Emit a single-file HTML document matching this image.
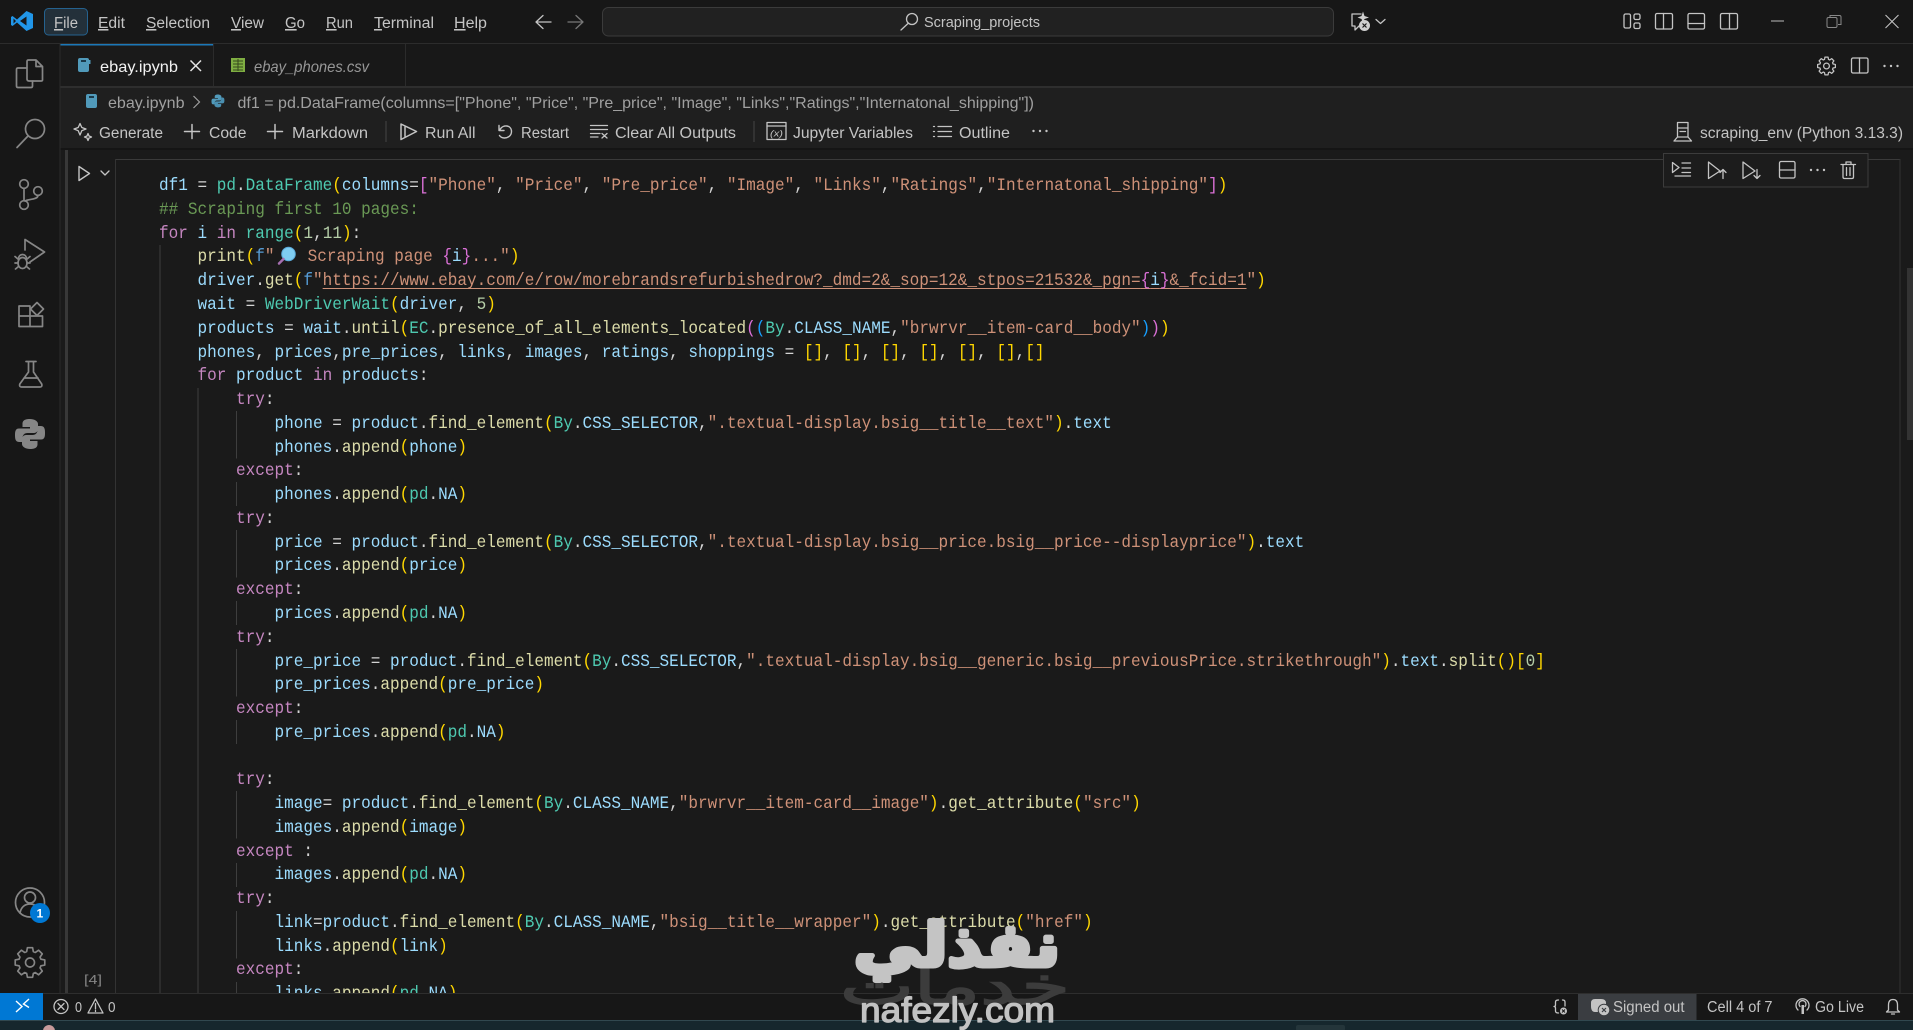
<!DOCTYPE html>
<html lang="en"><head><meta charset="utf-8"><title>Scraping_projects</title>
<style>
html,body{margin:0;padding:0;width:1913px;height:1030px;overflow:hidden;background:#1a1a1a}
svg{position:absolute;left:0;top:0}
svg text{font-family:"Liberation Sans",sans-serif;font-size:15.5px;fill:#c4c4c4;white-space:pre}
.i{fill:none;stroke:#c4c4c4;stroke-width:1.3;stroke-linecap:round;stroke-linejoin:round}
.a{fill:none;stroke:#868686;stroke-width:1.7;stroke-linecap:round;stroke-linejoin:round}
#c{position:absolute;left:158.6px;top:175.2px;margin:0;transform:scaleX(.9163);transform-origin:0 0;font:17.5px/23.77px "Liberation Mono",monospace;color:#d4d4d4;white-space:pre}
#c i{font-style:normal}
.v{color:#9cdcfe}.f{color:#dcdcaa}.t{color:#4ec9b0}.s{color:#ce9178}.k{color:#c586c0}.m{color:#6a9955}.n{color:#b5cea8}.y{color:#ffd700}.p{color:#da70d6}.b{color:#179fff}.a2{color:#569cd6}
u{text-decoration-color:#ce9178;text-underline-offset:3px}
</style></head><body>
<svg width="1913" height="1030" viewBox="0 0 1913 1030">
<defs>
<path id="gear" d="M.727-.222L.985-.174L.985.174L.727.222L.671.357L.819.574L.574.819L.357.671L.222.727L.174.985L-.174.985L-.222.727L-.357.671L-.574.819L-.819.574L-.671.357L-.727.222L-.985.174L-.985-.174L-.727-.222L-.671-.357L-.819-.574L-.574-.819L-.357-.671L-.222-.727L-.174-.985L.174-.985L.222-.727L.357-.671L.574-.819L.819-.574L.671-.357Z"/>
<path id="py" d="M15 0c-7 0-7.500 3-7.500 5v3h7.500v1.500H4C0 9.500 0 13.500 0 16s0 7 4 7h3.500v-4c0-3 2-5 5-5h6.500c2.500 0 4-2 4-4V5c0-3-4-5-8-5z"/>
</defs>
<!-- backgrounds -->
<rect width="1913" height="1030" fill="#1a1a1a"/>
<rect width="1913" height="44" fill="#171717"/>
<rect y="43" width="1913" height="1" fill="#2c2c2c"/>
<rect y="44" width="60" height="950" fill="#171717"/>
<rect x="60" y="44" width="1853" height="43" fill="#181818"/>
<rect x="60" y="44" width="153" height="43" fill="#1a1a1a"/>
<rect x="60" y="44" width="153" height="1.500" fill="#1c78b8"/>
<rect x="213" y="44" width="1" height="43" fill="#2b2b2b"/>
<rect x="405" y="44" width="1" height="43" fill="#2b2b2b"/>
<rect x="60" y="86" width="1853" height="2" fill="#2e2e2e"/>
<rect x="60" y="88" width="1853" height="60" fill="#1f1f1f"/>
<rect x="60" y="148" width="1853" height="2" fill="#151515"/>
<rect x="59.500" y="44" width="1" height="950" fill="#2b2b2b"/>
<rect x="65" y="150" width="3" height="844" fill="#383838"/>
<rect x="115" y="159" width="1785" height="1" fill="#3a3a3a"/>
<rect x="115" y="159" width="1" height="835" fill="#333"/>
<rect x="1899.500" y="159" width="1" height="835" fill="#333"/>
<rect x="1907" y="268" width="6" height="172" fill="#333"/>
<!-- indent guides -->
<g fill="#3e3e3e">
<rect x="159.500" y="245" width="1" height="748"/>
<rect x="197.500" y="388" width="1" height="605"/>
<rect x="236" y="411" width="1" height="47.500"/>
<rect x="236" y="482" width="1" height="24"/>
<rect x="236" y="530" width="1" height="47.500"/>
<rect x="236" y="601" width="1" height="24"/>
<rect x="236" y="649" width="1" height="47.500"/>
<rect x="236" y="720" width="1" height="24"/>
<rect x="236" y="791" width="1" height="47.500"/>
<rect x="236" y="863" width="1" height="24"/>
<rect x="236" y="911" width="1" height="47.500"/>
<rect x="236" y="982" width="1" height="12"/>
</g>
<!-- title bar -->
<path d="M26.500 11L33 14V28L26.500 31L17 22.500L12.500 26L11 25V17L12.500 16L17 19.500ZM26.500 16.500L20 21L26.500 25.500ZM13.500 18.500V23.500L16 21Z" fill="#2196e8" fill-rule="evenodd"/>
<rect x="44.500" y="8.500" width="43" height="26.500" rx="4" fill="#23303a" stroke="#25628f"/>
<text x="54" y="28" textLength="24" lengthAdjust="spacingAndGlyphs"><tspan text-decoration="underline">F</tspan>ile</text>
<text x="98" y="28" textLength="27" lengthAdjust="spacingAndGlyphs"><tspan text-decoration="underline">E</tspan>dit</text>
<text x="146" y="28" textLength="64" lengthAdjust="spacingAndGlyphs"><tspan text-decoration="underline">S</tspan>election</text>
<text x="231" y="28" textLength="33" lengthAdjust="spacingAndGlyphs"><tspan text-decoration="underline">V</tspan>iew</text>
<text x="285" y="28" textLength="20" lengthAdjust="spacingAndGlyphs"><tspan text-decoration="underline">G</tspan>o</text>
<text x="326" y="28" textLength="27" lengthAdjust="spacingAndGlyphs"><tspan text-decoration="underline">R</tspan>un</text>
<text x="374" y="28" textLength="60" lengthAdjust="spacingAndGlyphs"><tspan text-decoration="underline">T</tspan>erminal</text>
<text x="454" y="28" textLength="33" lengthAdjust="spacingAndGlyphs"><tspan text-decoration="underline">H</tspan>elp</text>
<path class="i" d="M536 22H551M536 22L543 15.500M536 22L543 28.500"/>
<path class="i" d="M568 22H583M583 22L576 15.500M583 22L576 28.500" style="stroke:#777"/>
<rect x="602.500" y="7.500" width="731" height="28.500" rx="6" fill="#212121" stroke="#3b3b3b"/>
<circle cx="912" cy="19" r="5.500" class="i"/><path class="i" d="M908 23.500L901 30"/>
<text x="924" y="27" textLength="116" lengthAdjust="spacingAndGlyphs" style="font-size:15px">Scraping_projects</text>
<!-- copilot -->
<path class="i" d="M1361 14H1352V26H1355V30L1359 26"/>
<path d="M1363 11.500L1364.500 16L1369 17.500L1364.500 19L1363 23L1361.500 19L1357.500 17.500L1361.500 16Z" fill="#cfcfcf"/>
<circle cx="1364.500" cy="25.500" r="5.500" fill="#cfcfcf"/><path d="M1362.500 23.500L1366.500 27.500M1366.500 23.500L1362.500 27.500" stroke="#171717" stroke-width="1.200"/>
<path class="i" d="M1376 19.500L1380.500 23.500L1385 19.500"/>
<!-- layout -->
<rect x="1624" y="14" width="6.500" height="14" rx="1.500" class="i"/><rect x="1634" y="14" width="6" height="5.500" rx="1.500" class="i"/><rect x="1634" y="23" width="6" height="5.500" rx="1.500" class="i"/>
<rect x="1655.500" y="13.500" width="17" height="15.500" rx="1.500" class="i"/><path class="i" d="M1663.500 13.500V29"/>
<rect x="1688" y="13.500" width="16.500" height="15.500" rx="1.500" class="i"/><path class="i" d="M1688 23.500H1704.500"/>
<rect x="1720.500" y="13.500" width="17" height="15.500" rx="1.500" class="i"/><path class="i" d="M1729.500 13.500V29"/>
<path d="M1771 21H1784" stroke="#bbb" stroke-width="1"/>
<rect x="1827" y="17.500" width="10" height="10" rx="1.500" fill="none" stroke="#888"/><path d="M1830 17V15.500H1839.500Q1841 15.500 1841 17V24.500H1838" fill="none" stroke="#888"/>
<path d="M1885.500 15L1898.500 28M1898.500 15L1885.500 28" stroke="#c8c8c8" stroke-width="1"/>
<!-- activity bar -->
<path class="a" d="M27 67V61.500Q27 60 28.500 60H36L42.500 66.500V80Q42.500 81 41 81H33M36 60V66.500H42.500"/>
<path class="a" d="M27 68H18Q16.500 68 16.500 69.500V86Q16.500 87.500 18 87.500H31Q32.500 87.500 32.500 86V81M27 67.500V79Q27 81 29 81H33"/>
<circle cx="35" cy="129" r="9.500" class="a"/><path class="a" d="M28 136L17 147.500"/>
<circle cx="24" cy="184" r="4.300" class="a"/><circle cx="24" cy="205" r="4.300" class="a"/><circle cx="38" cy="191" r="4.300" class="a"/><path class="a" d="M24 188.500V200.500M38 195.500C38 200 27 199 25 201"/>
<path class="a" d="M25 250V239.500L44.500 252L30 262"/>
<ellipse cx="22.500" cy="263" rx="4.500" ry="5.500" class="a"/><path class="a" d="M18.500 258.500A4 4 0 0 1 26.500 258.500M15 256.500L18.500 259.500M30 256.500L26.500 259.500M15 263H18M30 263H27M15.500 269L18.500 266.500M29.500 269L26.500 266.500"/>
<path class="a" d="M19 306H30V316H19ZM19 316H30V326.500H19ZM30 316H42.500V326.500H30Z"/>
<path class="a" d="M37 302.500L43.500 309L37 315.500L30.500 309Z"/>
<path class="a" d="M26 361.500H36M28.500 361.500V372L19.800 384Q19 387 21.500 387H40Q42.500 387 41.700 384L33.500 372V361.500M24 378H38"/>
<use href="#py" x="15" y="419" fill="#868686"/><use href="#py" transform="rotate(180 30 434)" x="15" y="419" fill="#868686"/>
<circle cx="30" cy="902.500" r="14.500" class="a"/><circle cx="30" cy="897.500" r="5.500" class="a"/><path class="a" d="M20 913C21 907 25 904 30 904S39 907 40 913"/>
<circle cx="40" cy="913" r="10" fill="#0078d4"/><text x="36.500" y="917.500" style="font-size:12px;font-weight:bold;fill:#fff">1</text>
<g transform="translate(30 962.500) scale(15)"><use href="#gear" fill="none" stroke="#868686" stroke-width=".11" stroke-linejoin="round"/><circle r=".3" fill="none" stroke="#868686" stroke-width=".11"/></g>
<!-- tabs -->
<rect x="78" y="58" width="11" height="14" rx="2" fill="#519aba"/><rect x="81" y="60" width="5" height="2" fill="#1a3a4a"/><rect x="89" y="60" width="1.500" height="4" fill="#519aba"/>
<text x="100" y="72" textLength="78" lengthAdjust="spacingAndGlyphs" style="font-size:16px;fill:#f2f2f2">ebay.ipynb</text>
<path d="M190.500 60.500L201 71M201 60.500L190.500 71" stroke="#e4e4e4" stroke-width="1.500"/>
<rect x="231" y="58" width="14" height="14" fill="#7fae42"/><path d="M233 61H243M233 64H243M233 67H243M233 70H243M238 59V71" stroke="#35491c" stroke-width="1"/>
<text x="254" y="72" textLength="115" lengthAdjust="spacingAndGlyphs" style="font-size:16px;font-style:italic;fill:#979797">ebay_phones.csv</text>
<!-- editor actions -->
<g transform="translate(1826.500 66) scale(9)"><use href="#gear" fill="none" stroke="#c4c4c4" stroke-width=".14" stroke-linejoin="round"/><circle r=".32" fill="none" stroke="#c4c4c4" stroke-width=".14"/></g>
<rect x="1851.500" y="58" width="16.500" height="15" rx="1.500" class="i"/><path class="i" d="M1859.500 58V73"/>
<g fill="#c4c4c4"><circle cx="1884.500" cy="66" r="1.200"/><circle cx="1891" cy="66" r="1.200"/><circle cx="1897.500" cy="66" r="1.200"/></g>
<!-- breadcrumbs -->
<rect x="86" y="94" width="11" height="14" rx="2" fill="#519aba"/><rect x="89" y="96" width="5" height="2" fill="#1a3a4a"/>
<text x="108" y="108" textLength="76.500" lengthAdjust="spacingAndGlyphs" style="font-size:16px;fill:#a0a0a0">ebay.ipynb</text>
<path d="M193.500 96L199.500 102L193.500 108" fill="none" stroke="#a0a0a0" stroke-width="1.200"/>
<g transform="translate(211.500 94.500) scale(.43)"><use href="#py" fill="#519aba"/><use href="#py" transform="rotate(180 15 15)" fill="#4a8fb0"/></g>
<text x="237.500" y="108" textLength="796.500" lengthAdjust="spacingAndGlyphs" style="font-size:16px;fill:#a0a0a0">df1 = pd.DataFrame(columns=["Phone", "Price", "Pre_price", "Image", "Links","Ratings","Internatonal_shipping"])</text>
<!-- toolbar -->
<path class="i" d="M80 123.500L81.800 127.500L86 129L81.800 130.700L80 135L78.200 130.700L74 129L78.200 127.500Z"/><path class="i" d="M88 133.500L89 136L91.500 137L89 138L88 140.500L87 138L84.500 137L87 136Z"/>
<text x="99" y="138" textLength="64" lengthAdjust="spacingAndGlyphs">Generate</text>
<path class="i" d="M184.500 131.500H199.500M192 124.500V138.500" style="stroke-width:1.500"/>
<text x="209" y="138" textLength="37.500" lengthAdjust="spacingAndGlyphs">Code</text>
<path class="i" d="M267.500 131.500H282.500M275 124.500V138.500" style="stroke-width:1.500"/>
<text x="292" y="138" textLength="76" lengthAdjust="spacingAndGlyphs">Markdown</text>
<rect x="385.500" y="121" width="1" height="21" fill="#444"/>
<path class="i" d="M401 124L416.500 131.500L401 139.500ZM405 127V136.500" style="stroke-width:1.500"/>
<text x="425" y="138" textLength="50.500" lengthAdjust="spacingAndGlyphs">Run All</text>
<path class="i" d="M499 125.500V130.500H504M500 129.500C503 124 511.500 125 511.500 131.500C511.500 136 507.500 138 504.500 138C502 138 500.500 137 499.500 135.500" style="stroke-width:1.400"/>
<text x="521" y="138" textLength="48" lengthAdjust="spacingAndGlyphs">Restart</text>
<path class="i" d="M590.500 125.500H607.500M590.500 129.500H607.500M590.500 133.500H600M590.500 137H598M602 133.500L607 138M607 133.500L602 138"/>
<text x="615" y="138" textLength="121" lengthAdjust="spacingAndGlyphs">Clear All Outputs</text>
<rect x="753.500" y="121" width="1" height="21" fill="#444"/>
<rect x="767" y="122.500" width="19" height="17" class="i"/><path class="i" d="M767 126H786"/>
<text x="770" y="136.500" textLength="13" lengthAdjust="spacingAndGlyphs" style="font-size:9.500px;font-style:italic">(x)</text>
<text x="793" y="138" textLength="120" lengthAdjust="spacingAndGlyphs">Jupyter Variables</text>
<path class="i" d="M938 126.500H951.500M938 131.500H951.500M938 136.500H951.500M933.500 126.500H934.500M933.500 131.500H934.500M933.500 136.500H934.500"/>
<text x="959" y="138" textLength="51" lengthAdjust="spacingAndGlyphs">Outline</text>
<g fill="#c4c4c4"><circle cx="1033.500" cy="131" r="1.200"/><circle cx="1040" cy="131" r="1.200"/><circle cx="1046.500" cy="131" r="1.200"/></g>
<path class="i" d="M1677.500 122.500H1688V137H1677.500ZM1677.500 128H1688M1680 131.500H1685.500M1677.500 137L1674 141H1691.500L1688 137"/>
<text x="1700" y="138" textLength="203" lengthAdjust="spacingAndGlyphs">scraping_env (Python 3.13.3)</text>
<!-- gutter -->
<path class="i" d="M79 166.500L89.500 173.500L79 180.500Z" style="stroke-width:1.400"/>
<path class="i" d="M101 171L105 175L109 171"/>
<text x="84" y="984" textLength="18" lengthAdjust="spacingAndGlyphs" style="font-size:13px;fill:#858585">[4]</text>
</svg>

<pre id="c"><i class="v">df1</i> = <i class="t">pd</i>.<i class="t">DataFrame</i><i class="y">(</i><i class="v">columns</i>=<i class="p">[</i><i class="s">"Phone"</i>, <i class="s">"Price"</i>, <i class="s">"Pre_price"</i>, <i class="s">"Image"</i>, <i class="s">"Links"</i>,<i class="s">"Ratings"</i>,<i class="s">"Internatonal_shipping"</i><i class="p">]</i><i class="y">)</i>
<i class="m">## Scraping first 10 pages:</i>
<i class="k">for</i> <i class="v">i</i> <i class="k">in</i> <i class="t">range</i><i class="y">(</i><i class="n">1</i>,<i class="n">11</i><i class="y">)</i>:
    <i class="f">print</i><i class="y">(</i><i class="a2">f</i><i class="s">"</i><span style="display:inline-block;width:36.200px"></span><i class="s">Scraping page </i><i class="p">{</i><i class="v">i</i><i class="p">}</i><i class="s">..."</i><i class="y">)</i>
    <i class="v">driver</i>.<i class="f">get</i><i class="y">(</i><i class="a2">f</i><i class="s">"</i><u><i class="s">https://www.ebay.com/e/row/morebrandsrefurbishedrow?_dmd=2&amp;_sop=12&amp;_stpos=21532&amp;_pgn=</i><i class="p">{</i><i class="v">i</i><i class="p">}</i><i class="s">&amp;_fcid=1</i></u><i class="s">"</i><i class="y">)</i>
    <i class="v">wait</i> = <i class="t">WebDriverWait</i><i class="y">(</i><i class="v">driver</i>, <i class="n">5</i><i class="y">)</i>
    <i class="v">products</i> = <i class="v">wait</i>.<i class="f">until</i><i class="y">(</i><i class="t">EC</i>.<i class="f">presence_of_all_elements_located</i><i class="p">(</i><i class="b">(</i><i class="t">By</i>.<i class="v">CLASS_NAME</i>,<i class="s">"brwrvr__item-card__body"</i><i class="b">)</i><i class="p">)</i><i class="y">)</i>
    <i class="v">phones</i>, <i class="v">prices</i>,<i class="v">pre_prices</i>, <i class="v">links</i>, <i class="v">images</i>, <i class="v">ratings</i>, <i class="v">shoppings</i> = <i class="y">[]</i>, <i class="y">[]</i>, <i class="y">[]</i>, <i class="y">[]</i>, <i class="y">[]</i>, <i class="y">[]</i>,<i class="y">[]</i>
    <i class="k">for</i> <i class="v">product</i> <i class="k">in</i> <i class="v">products</i>:
        <i class="k">try</i>:
            <i class="v">phone</i> = <i class="v">product</i>.<i class="f">find_element</i><i class="y">(</i><i class="t">By</i>.<i class="v">CSS_SELECTOR</i>,<i class="s">".textual-display.bsig__title__text"</i><i class="y">)</i>.<i class="v">text</i>
            <i class="v">phones</i>.<i class="f">append</i><i class="y">(</i><i class="v">phone</i><i class="y">)</i>
        <i class="k">except</i>:
            <i class="v">phones</i>.<i class="f">append</i><i class="y">(</i><i class="t">pd</i>.<i class="v">NA</i><i class="y">)</i>
        <i class="k">try</i>:
            <i class="v">price</i> = <i class="v">product</i>.<i class="f">find_element</i><i class="y">(</i><i class="t">By</i>.<i class="v">CSS_SELECTOR</i>,<i class="s">".textual-display.bsig__price.bsig__price--displayprice"</i><i class="y">)</i>.<i class="v">text</i>
            <i class="v">prices</i>.<i class="f">append</i><i class="y">(</i><i class="v">price</i><i class="y">)</i>
        <i class="k">except</i>:
            <i class="v">prices</i>.<i class="f">append</i><i class="y">(</i><i class="t">pd</i>.<i class="v">NA</i><i class="y">)</i>
        <i class="k">try</i>:
            <i class="v">pre_price</i> = <i class="v">product</i>.<i class="f">find_element</i><i class="y">(</i><i class="t">By</i>.<i class="v">CSS_SELECTOR</i>,<i class="s">".textual-display.bsig__generic.bsig__previousPrice.strikethrough"</i><i class="y">)</i>.<i class="v">text</i>.<i class="f">split</i><i class="y">()[</i><i class="n">0</i><i class="y">]</i>
            <i class="v">pre_prices</i>.<i class="f">append</i><i class="y">(</i><i class="v">pre_price</i><i class="y">)</i>
        <i class="k">except</i>:
            <i class="v">pre_prices</i>.<i class="f">append</i><i class="y">(</i><i class="t">pd</i>.<i class="v">NA</i><i class="y">)</i>

        <i class="k">try</i>:
            <i class="v">image</i>= <i class="v">product</i>.<i class="f">find_element</i><i class="y">(</i><i class="t">By</i>.<i class="v">CLASS_NAME</i>,<i class="s">"brwrvr__item-card__image"</i><i class="y">)</i>.<i class="f">get_attribute</i><i class="y">(</i><i class="s">"src"</i><i class="y">)</i>
            <i class="v">images</i>.<i class="f">append</i><i class="y">(</i><i class="v">image</i><i class="y">)</i>
        <i class="k">except</i> :
            <i class="v">images</i>.<i class="f">append</i><i class="y">(</i><i class="t">pd</i>.<i class="v">NA</i><i class="y">)</i>
        <i class="k">try</i>:
            <i class="v">link</i>=<i class="v">product</i>.<i class="f">find_element</i><i class="y">(</i><i class="t">By</i>.<i class="v">CLASS_NAME</i>,<i class="s">"bsig__title__wrapper"</i><i class="y">)</i>.<i class="f">get_attribute</i><i class="y">(</i><i class="s">"href"</i><i class="y">)</i>
            <i class="v">links</i>.<i class="f">append</i><i class="y">(</i><i class="v">link</i><i class="y">)</i>
        <i class="k">except</i>:
            <i class="v">links</i>.<i class="f">append</i><i class="y">(</i><i class="t">pd</i>.<i class="v">NA</i><i class="y">)</i></pre>

<svg width="1913" height="1030" viewBox="0 0 1913 1030">
<!-- emoji -->
<circle cx="288.500" cy="254" r="6.800" fill="#7fcdf2"/><circle cx="288.500" cy="254" r="6.800" fill="none" stroke="#5aa8d8"/>
<path d="M283.500 259L279 263.500" stroke="#a66fb0" stroke-width="2.500" stroke-linecap="round"/>
<!-- cell toolbar -->
<rect x="1663.500" y="153.500" width="204.500" height="33.500" fill="#1c1c1c" stroke="#3c3c3c"/>
<path class="i" d="M1672.500 162.500L1679 167.500L1672.500 172.500ZM1682 163H1690.500M1682 168H1690.500M1675 176H1690.500M1682 172.500H1690.500"/>
<path class="i" d="M1708.500 162L1720 171L1708.500 178.500ZM1723 178.500V169.500M1720 172.500L1723 169.500L1726 172.500"/>
<path class="i" d="M1743 162L1755 171L1743 178.500ZM1757 169.500V178.500M1754 175.500L1757 178.500L1760 175.500"/>
<rect x="1779.500" y="161.500" width="15.500" height="16.500" rx="1.500" class="i"/><path class="i" d="M1779.500 170H1795"/>
<g fill="#c4c4c4"><circle cx="1811" cy="170" r="1.200"/><circle cx="1817.500" cy="170" r="1.200"/><circle cx="1824" cy="170" r="1.200"/></g>
<path class="i" d="M1841 164.500H1855.500M1846 164.500V162H1851V164.500M1843 164.500V177Q1843 178.500 1844.500 178.500H1852Q1853.500 178.500 1853.500 177V164.500M1846.500 167.500V175.500M1850 167.500V175.500"/>
<!-- status -->
<rect y="993" width="1913" height="27" fill="#171717"/>
<rect y="993" width="1913" height="1" fill="#2e2e2e"/>
<rect width="43" height="27" y="993" fill="#0078d4"/>
<path d="M16 1001L22 1006.500L16 1012M29 999L23.500 1004L29 1007.500" fill="none" stroke="#fff" stroke-width="1.400"/>
<circle cx="61" cy="1006.500" r="7" class="i"/><path class="i" d="M58 1003.500L64 1009.500M64 1003.500L58 1009.500"/>
<text x="75" y="1012" textLength="7" lengthAdjust="spacingAndGlyphs" style="font-size:15px">0</text>
<path class="i" d="M95.500 999L103 1013H88ZM95.500 1003.500V1009M95.500 1010.500V1011.500"/>
<text x="108" y="1012" textLength="7.500" lengthAdjust="spacingAndGlyphs" style="font-size:15px">0</text>
<path class="i" d="M1558.500 1000Q1555.500 1000 1555.500 1002V1005Q1555.500 1006.500 1554 1006.500Q1555.500 1006.500 1555.500 1008V1011Q1555.500 1013 1558.500 1013M1562.500 1000Q1565 1000 1565 1002V1006"/>
<circle cx="1563.500" cy="1011" r="3.500" fill="#c4c4c4"/><path d="M1562 1009.500L1565 1012.500M1565 1009.500L1562 1012.500" stroke="#171717"/>
<rect x="1578" y="994" width="118.500" height="26" fill="#3a3d41"/>
<path d="M1595 999H1601Q1606 999 1606 1003V1006H1601L1599 1012H1595Q1591 1012 1591 1006V1003Q1591 999 1595 999Z" fill="#c4c4c4"/>
<circle cx="1604" cy="1010" r="5.800" fill="#c4c4c4" stroke="#3a3d41"/><path d="M1602 1008L1606 1012M1606 1008L1602 1012" stroke="#3a3d41" stroke-width="1.200"/>
<text x="1613" y="1012" textLength="71.500" lengthAdjust="spacingAndGlyphs">Signed out</text>
<text x="1707" y="1012" textLength="65.500" lengthAdjust="spacingAndGlyphs">Cell 4 of 7</text>
<path class="i" d="M1798 1010A6.500 6.500 0 1 1 1807 1010M1800 1006.500A3.500 3.500 0 1 1 1805 1006.500"/><rect x="1801.500" y="1005" width="2.500" height="9" fill="#c4c4c4"/>
<text x="1815" y="1012" textLength="49" lengthAdjust="spacingAndGlyphs">Go Live</text>
<path class="i" d="M1893 999.500C1889.500 999.500 1888.500 1002 1888.500 1005V1010L1886.500 1012H1899.500L1897.500 1010V1005C1897.500 1002 1896.500 999.500 1893 999.500ZM1891.500 1014H1894.500"/>
<!-- taskbar strip -->
<rect y="1020" width="1913" height="10" fill="#16272d"/>
<rect y="1020" width="1913" height="1" fill="#31484f"/>
<circle cx="49" cy="1031" r="6" fill="#c79a9a"/>
<rect x="1296" y="1025" width="49" height="6" rx="2" fill="#24353a"/>
<!-- watermark -->
<text x="1070" y="1004" textLength="230" lengthAdjust="spacingAndGlyphs" direction="rtl" style="font-family:'DejaVu Sans',sans-serif;font-size:52px;fill:#3c3c3c;stroke:#3c3c3c;stroke-width:1.500">خدمات</text>
<text x="1060" y="966" textLength="206" lengthAdjust="spacingAndGlyphs" direction="rtl" style="font-family:'DejaVu Sans',sans-serif;font-weight:bold;font-size:60px;fill:#c4c4c4;stroke:#c4c4c4;stroke-width:5;stroke-linejoin:round">نفذلي</text>
<text x="860" y="1022" textLength="195" lengthAdjust="spacingAndGlyphs" style="font-size:35px;fill:#c2c2c2;stroke:#c2c2c2;stroke-width:1.300;stroke-linejoin:round">nafezly.com</text>
</svg>
</body></html>
